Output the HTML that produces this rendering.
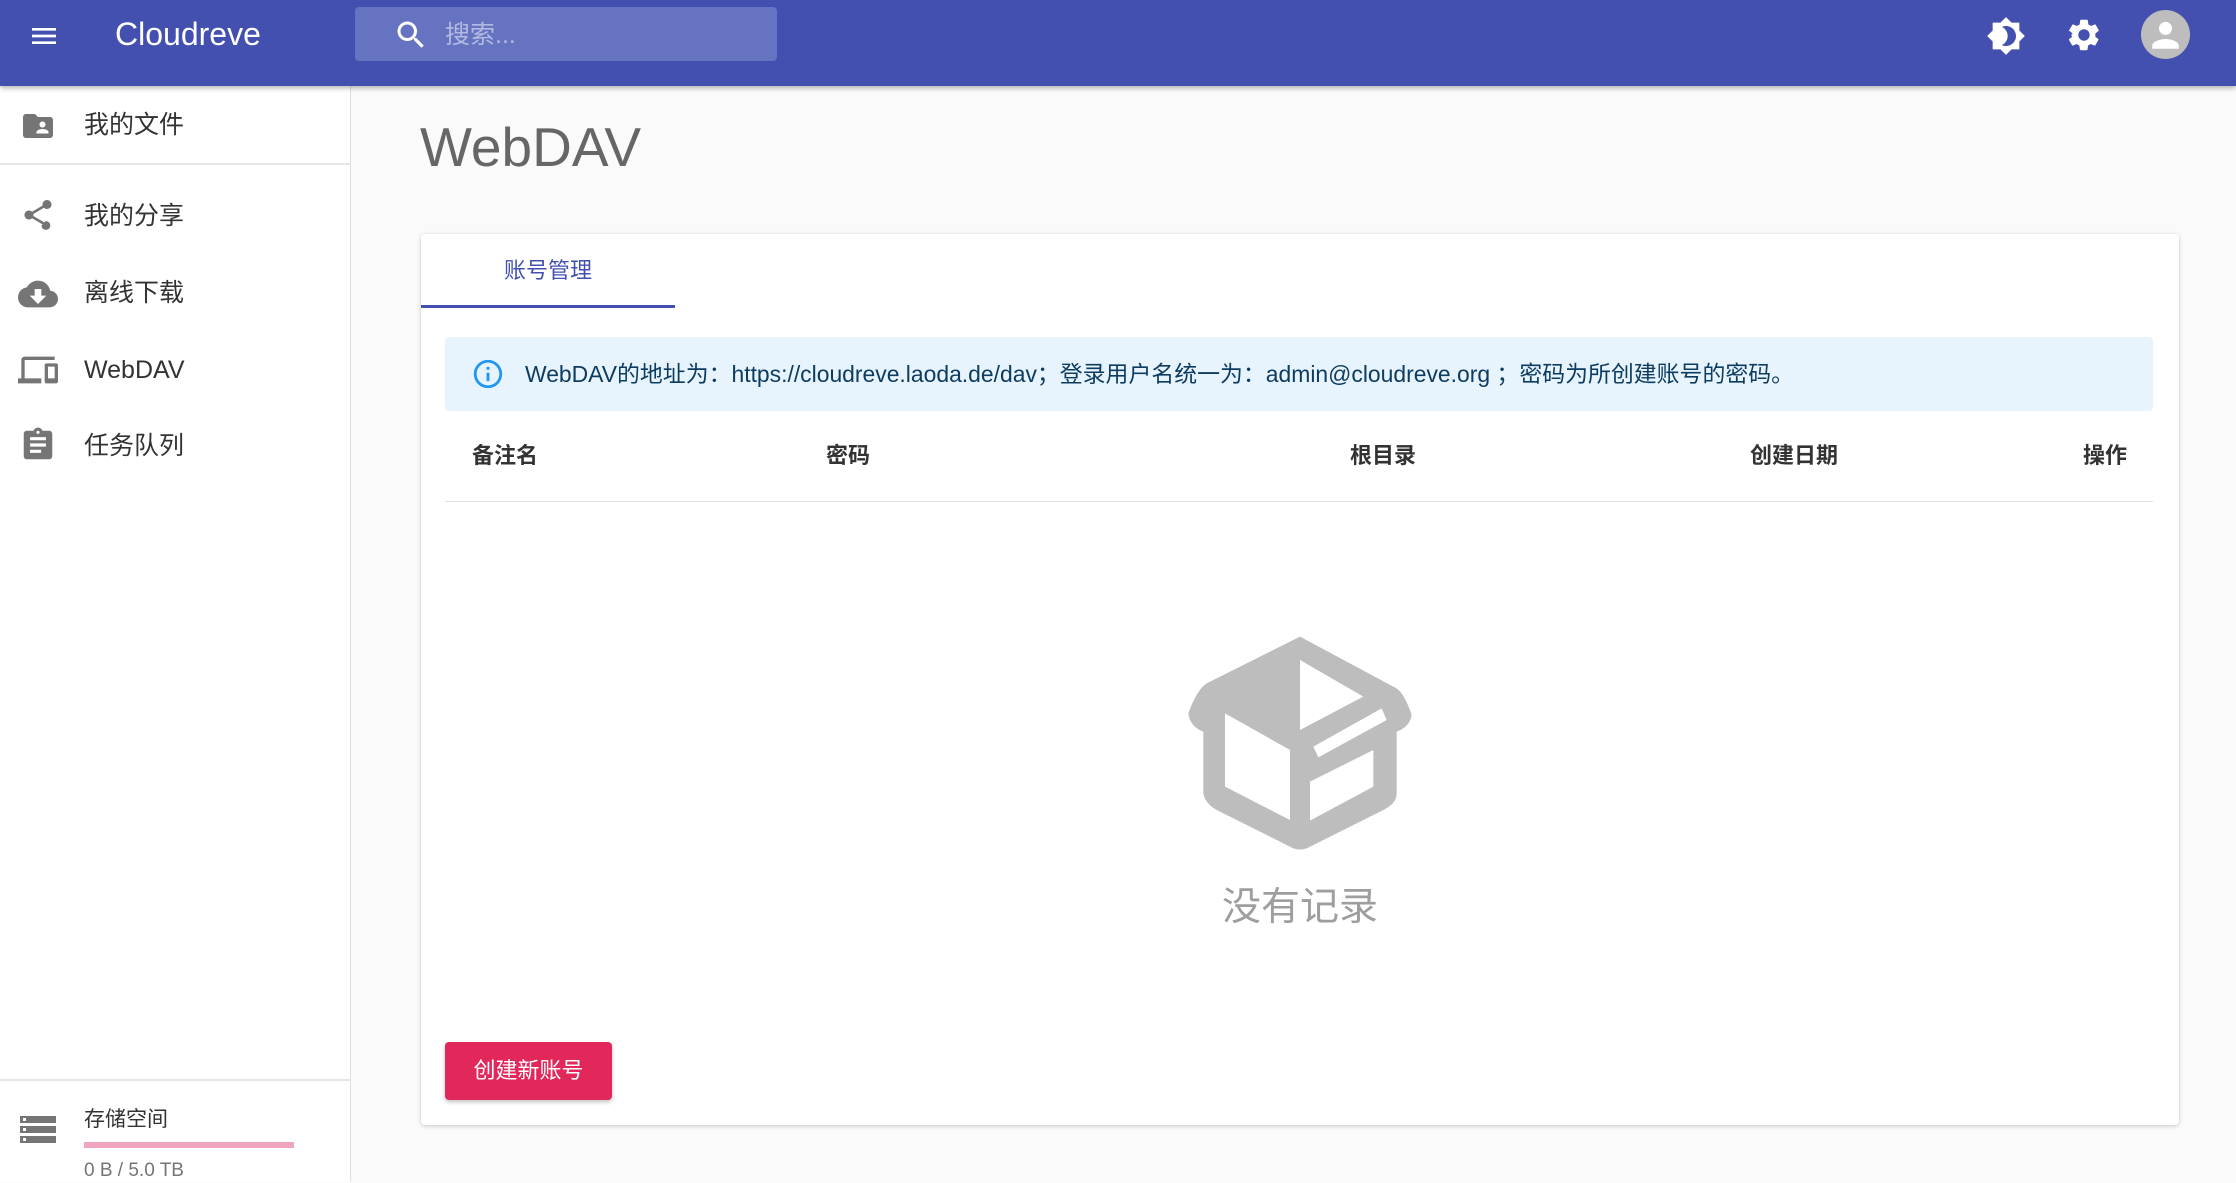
<!DOCTYPE html>
<html><head><meta charset="utf-8"><style>
*{box-sizing:border-box;margin:0;padding:0}
body{width:2236px;height:1182px;overflow:hidden;background:#fafafa;font-family:"Liberation Sans","Noto Sans CJK SC",sans-serif;position:relative}
.abs{position:absolute}
.bar{left:0;top:0;width:2236px;height:86px;background:#4350af;box-shadow:0 2px 5px rgba(0,0,0,.3);z-index:3}
.side{left:0;top:86px;width:351px;height:1096px;background:#fff;border-right:1px solid #e0e0e0}
.item{position:absolute;left:84px;font-size:25px;color:#333;line-height:30px}
.ic{position:absolute;fill:#757575}
.card{left:421px;top:234px;width:1758px;height:891px;background:#fff;border-radius:4px;box-shadow:0 1px 4px rgba(0,0,0,.22)}
.th{position:absolute;top:208px;font-size:22px;font-weight:bold;color:#333;line-height:28px}
</style></head><body>
<div class="abs bar">
 <svg class="abs" style="left:28px;top:20px" width="32" height="32" viewBox="0 0 24 24" fill="#fff"><path d="M3 18h18v-2H3v2zm0-5h18v-2H3v2zm0-7v2h18V6H3z"/></svg>
 <div class="abs" style="left:115px;top:16px;font-size:32px;color:#fff;line-height:36px">Cloudreve</div>
 <div class="abs" style="left:355px;top:7px;width:422px;height:54px;background:#6673c0;border-radius:4px"></div>
 <svg class="abs" style="left:393px;top:17px" width="36" height="36" viewBox="0 0 24 24" fill="#fff"><path d="M15.5 14h-.79l-.28-.27A6.470 6.470 0 0016 9.5 6.5 6.5 0 109.5 16c1.61 0 3.09-.59 4.230-1.57l.27.28v.79l5 4.99L20.49 19l-4.99-5zm-6 0C7.01 14 5 11.99 5 9.5S7.01 5 9.5 5 14 7.01 14 9.5 11.99 14 9.5 14z"/></svg>
 <div class="abs" style="left:445px;top:20px;font-size:25px;color:#b3b9e0;line-height:30px">搜索...</div>
 <svg class="abs" style="left:1986px;top:16px" width="40" height="40" viewBox="0 0 24 24" fill="#fff"><path d="M20 8.69V4h-4.69L12 .69 8.69 4H4v4.69L.69 12 4 15.31V20h4.69L12 23.31 15.31 20H20v-4.69L23.31 12 20 8.69zM12 18c-.89 0-1.74-.2-2.5-.55C11.56 16.5 13 14.42 13 12s-1.44-4.5-3.5-5.45C10.26 6.2 11.11 6 12 6c3.31 0 6 2.690 6 6s-2.69 6-6 6z"/></svg>
 <svg class="abs" style="left:2065px;top:16px" width="38" height="38" viewBox="0 0 24 24" fill="#fff"><path d="M19.14 12.94c.04-.3.06-.61.06-.94 0-.32-.02-.64-.07-.94l2.03-1.58a.49.49 0 00.12-.61l-1.92-3.32a.488.488 0 00-.59-.22l-2.39.96c-.5-.38-1.03-.7-1.62-.94l-.36-2.54a.484.484 0 00-.48-.41h-3.84c-.24 0-.43.17-.47.41l-.36 2.540c-.59.24-1.13.57-1.62.94l-2.39-.96c-.22-.08-.47 0-.59.22L2.74 8.87c-.12.21-.8.47.12.61l2.03 1.58c-.5.3-.9.63-.9.94s.2.64.7.94l-2.03 1.58a.49.49 0 00-.12.61l1.92 3.32c.12.22.37.29.59.22l2.39-.96c.5.38 1.03.7 1.62.94l.36 2.54c.5.24.24.41.48.41h3.84c.24 0 .44-.17.47-.41l.36-2.54c.59-.24 1.13-.56 1.62-.94l2.39.96c.22.08.47 0 .59-.22l1.92-3.32c.12-.22.07-.47-.12-.61l-2.01-1.58zM12 15.6c-1.98 0-3.6-1.62-3.6-3.6s1.62-3.6 3.6-3.6 3.6 1.62 3.6 3.6-1.62 3.6-3.6 3.6z"/></svg>
 <div class="abs" style="left:2141px;top:10px;width:49px;height:49px;border-radius:50%;background:#bdbdbd;overflow:hidden">
  <svg width="49" height="49" viewBox="0 0 24 24" fill="#fff"><circle cx="12" cy="9" r="3.2"/><path d="M5.5 17.5c0-2.2 4.3-3.3 6.5-3.3s6.5 1.1 6.5 3.3V19h-13z"/></svg>
 </div>
</div>

<div class="abs side">
 <svg class="ic" style="left:20px;top:22px" width="36" height="36" viewBox="0 0 24 24"><path d="M20 6h-8l-2-2H4c-1.1 0-2 .9-2 2v12c0 1.1.9 2 2 2h16c1.1 0 2-.9 2-2V8c0-1.1-.9-2-2-2zm-5 3c1.1 0 2 .9 2 2s-.9 2-2 2-2-.9-2-2 .9-2 2-2zm4 8h-8v-1c0-1.33 2.67-2 4-2s4 .67 4 2v1z"/></svg>
 <div class="item" style="top:24px">我的文件</div>
 <div class="abs" style="left:0;top:77px;width:350px;height:2px;background:#e6e6e6"></div>
 <svg class="ic" style="left:20px;top:111px" width="36" height="36" viewBox="0 0 24 24"><path d="M18 16.08c-.76 0-1.44.3-1.96.77L8.91 12.7c.05-.23.09-.46.09-.7s-.04-.47-.09-.7l7.05-4.11c.54.5 1.25.81 2.04.81 1.66 0 3-1.34 3-3s-1.34-3-3-3-3 1.34-3 3c0 .24.04.47.09.7L8.04 9.81C7.5 9.31 6.79 9 6 9c-1.66 0-3 1.34-3 3s1.34 3 3 3c.79 0 1.5-.31 2.04-.81l7.12 4.16c-.5.21-.8.43-.8.65 0 1.61 1.31 2.92 2.92 2.92s2.92-1.31 2.92-2.92-1.31-2.92-2.92-2.92z"/></svg>
 <div class="item" style="top:115px">我的分享</div>
 <svg class="ic" style="left:18px;top:188px" width="40" height="40" viewBox="0 0 24 24"><path d="M19.35 10.04C18.67 6.59 15.64 4 12 4 9.11 4 6.6 5.64 5.35 8.04 2.34 8.36 0 10.91 0 14c0 3.31 2.69 6 6 6h13c2.76 0 5-2.24 5-5 0-2.64-2.05-4.78-4.65-4.96zM17 13l-5 5-5-5h3V9h4v4h3z"/></svg>
 <div class="item" style="top:192px">离线下载</div>
 <svg class="ic" style="left:18px;top:264px" width="40" height="40" viewBox="0 0 24 24"><path d="M4 6h18V4H4c-1.1 0-2 .9-2 2v11H0v3h14v-3H4V6zm19 2h-6c-.55 0-1 .45-1 1v10c0 .55.45 1 1 1h6c.55 0 1-.45 1-1V9c0-.55-.45-1-1-1zm-1 9h-4v-7h4v7z"/></svg>
 <div class="item" style="top:269px">WebDAV</div>
 <svg class="ic" style="left:19px;top:340px" width="38" height="38" viewBox="0 0 24 24"><path d="M19 3h-4.18C14.4 1.84 13.3 1 12 1c-1.3 0-2.4.84-2.82 2H5c-1.1 0-2 .9-2 2v14c0 1.1.9 2 2 2h14c1.1 0 2-.9 2-2V5c0-1.1-.9-2-2-2zm-7 0c.55 0 1 .45 1 1s-.45 1-1 1-1-.45-1-1 .45-1 1-1zm2 14H7v-2h7v2zm3-4H7v-2h10v2zm0-4H7V7h10v2z"/></svg>
 <div class="item" style="top:345px">任务队列</div>
 <div class="abs" style="left:0;top:993px;width:350px;height:2px;background:#e6e6e6"></div>
 <svg class="abs" style="left:20px;top:1028px" width="36" height="30" viewBox="0 0 36 30"><rect x="0" y="2" width="36" height="7" fill="#757575"/><rect x="0" y="12" width="36" height="7" fill="#757575"/><rect x="0" y="22" width="36" height="7" fill="#757575"/><rect x="3" y="4" width="3" height="3" fill="#fff"/><rect x="3" y="14" width="3" height="3" fill="#fff"/><rect x="3" y="24" width="3" height="3" fill="#fff"/></svg>
 <div class="abs" style="left:84px;top:1021px;font-size:21px;color:#333;line-height:26px">存储空间</div>
 <div class="abs" style="left:84px;top:1056px;width:210px;height:6px;background:#f0a4bf"></div>
 <div class="abs" style="left:84px;top:1073px;font-size:19px;color:#757575;line-height:24px">0 B / 5.0 TB</div>
</div>

<div class="abs" style="left:420px;top:115px;font-size:55px;color:#666;line-height:64px">WebDAV</div>

<div class="abs card">
 <div class="abs" style="left:0;top:22px;width:254px;text-align:center;font-size:22px;color:#4350af;line-height:30px">账号管理</div>
 <div class="abs" style="left:0;top:71px;width:254px;height:3px;background:#4350af"></div>
 <div class="abs" style="left:24px;top:103px;width:1708px;height:74px;background:#e8f4fd;border-radius:4px"></div>
 <svg class="abs" style="left:50px;top:123px" width="34" height="34" viewBox="0 0 24 24" fill="#2196f3"><path d="M11 7h2v2h-2zm0 4h2v6h-2zm1-9C6.48 2 2 6.48 2 12s4.48 10 10 10 10-4.48 10-10S17.52 2 12 2zm0 18c-4.41 0-8-3.590-8-8s3.59-8 8-8 8 3.59 8 8-3.59 8-8 8z"/></svg>
 <div class="abs" style="left:104px;top:125px;font-size:22.9px;color:#0d3c61;line-height:30px;white-space:nowrap">WebDAV的地址为：https://cloudreve.laoda.de/dav；登录用户名统一为：admin@cloudreve.org ；密码为所创建账号的密码。</div>
 <div class="th" style="left:51px">备注名</div>
 <div class="th" style="left:405px">密码</div>
 <div class="th" style="left:929px">根目录</div>
 <div class="th" style="left:1329px">创建日期</div>
 <div class="th" style="left:1662px">操作</div>
 <div class="abs" style="left:24px;top:267px;width:1708px;height:1px;background:#e0e0e0"></div>
 <svg class="abs" style="left:729px;top:366px" width="300" height="350" viewBox="0 0 900 1050">
  <path fill="#bdbdbd" d="M450 110 L170 250 Q140 270 115 340 Q120 380 160 395 L160 580 Q165 610 200 630 L430 745 Q450 752 470 745 L700 630 Q740 610 740 580 L740 395 Q780 380 785 345 Q760 270 730 260 Z"/>
  <path fill="#fff" d="M225 340 L420 450 L420 660 L225 560 Z"/>
  <path fill="#fff" d="M450 180 L640 290 L450 390 Z"/>
  <path fill="#fff" d="M490 440 L695 325 L710 360 L505 472 Z"/>
  <path fill="#fff" d="M480 545 L670 450 L670 560 L480 662 Z"/>
 </svg>
 <div class="abs" style="left:0;top:650px;width:1758px;text-align:center;font-size:39px;color:#9e9e9e;line-height:48px">没有记录</div>
 <div class="abs" style="left:24px;top:808px;width:167px;height:58px;background:#e2275a;border-radius:4px;box-shadow:0 2px 4px rgba(0,0,0,.25);color:#fff;font-size:22px;line-height:58px;text-align:center">创建新账号</div>
</div>
</body></html>
